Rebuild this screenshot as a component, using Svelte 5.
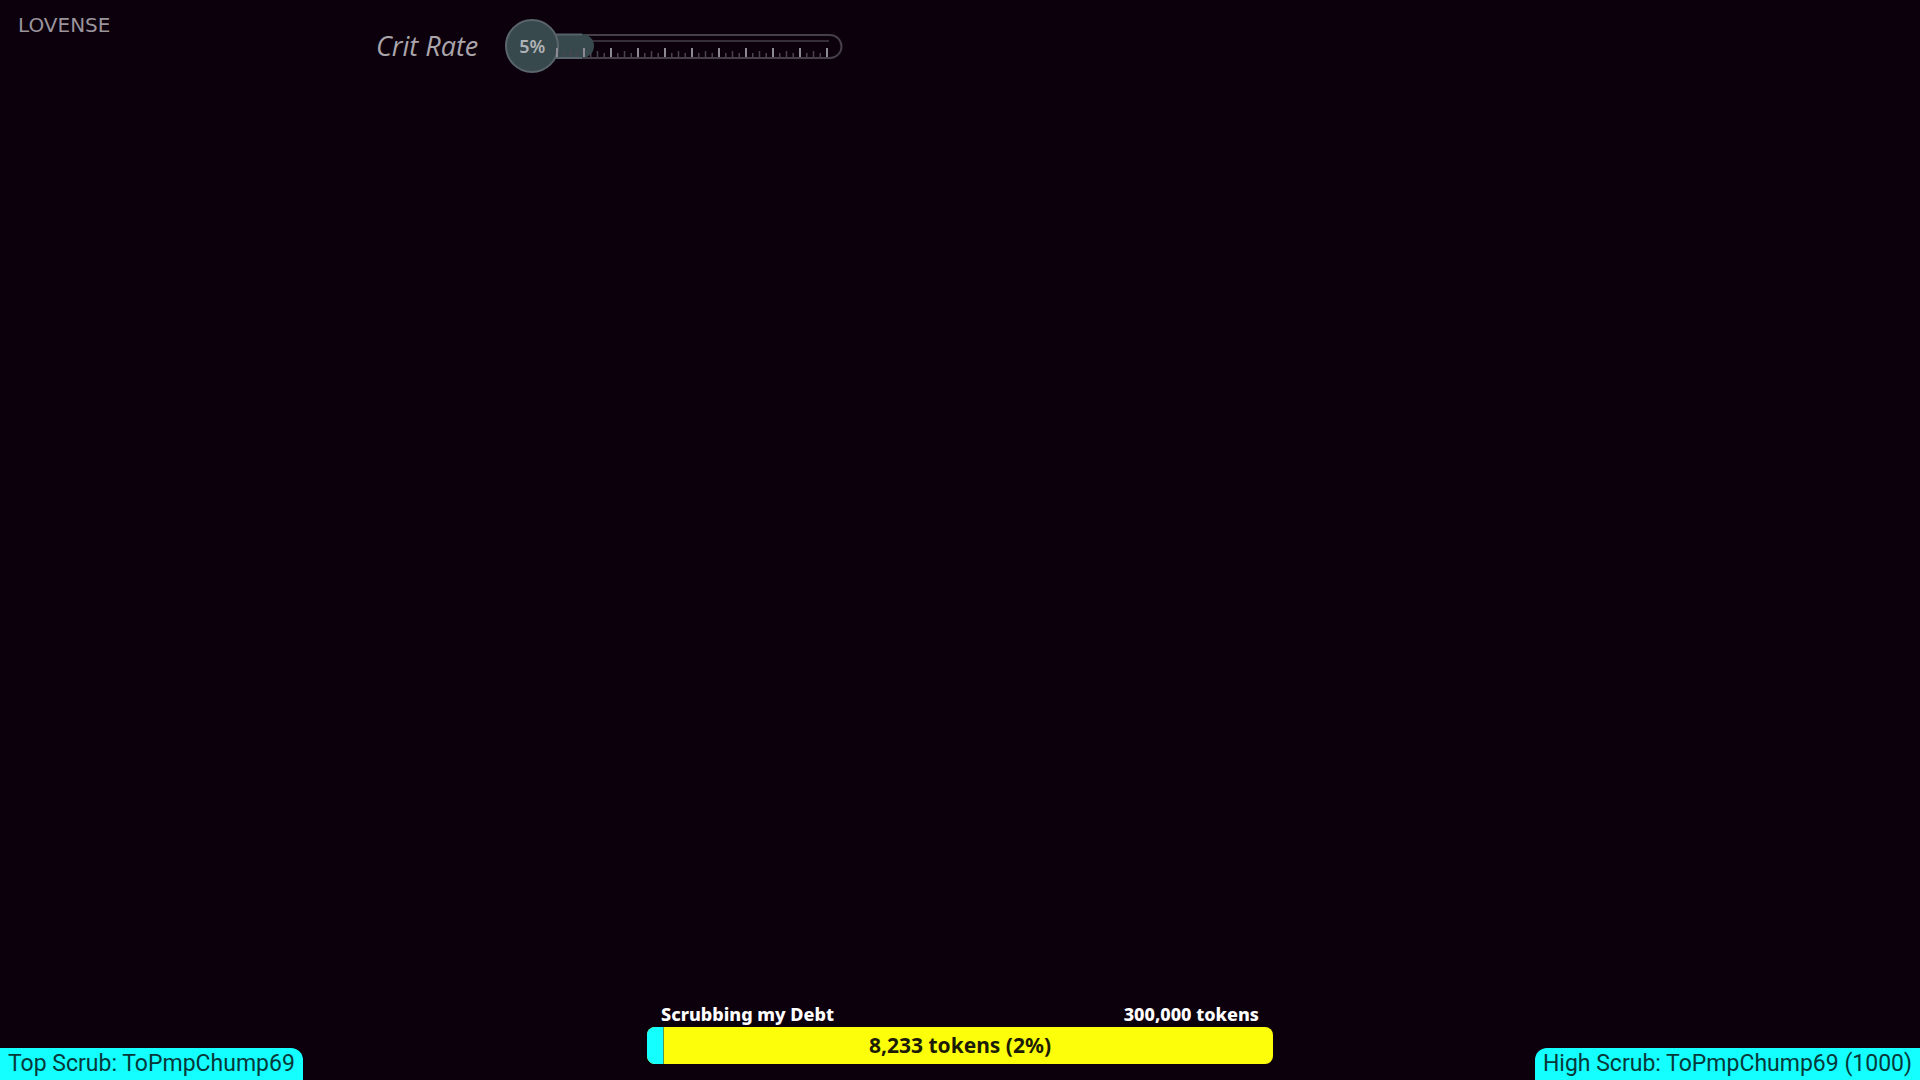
<script lang="ts">
  export let critRate: number = 5;
  export let raised: number = 8233;
  export let goal: number = 300000;
  export let topScrub: string = "ToPmpChump69";
  export let highScrub: string = "ToPmpChump69";
  export let highAmount: number = 1000;

  const tickGap = 6.75;
  const ticks = Array.from({ length: 41 }, (_, i) => ({
    x: 53 + i * tickGap,
    major: i % 4 === 0,
    top: i % 4 === 0 ? 30 : i % 2 === 0 ? 33 : 35,
  }));

  $: percent = (raised / goal) * 100;
</script>

<main class="overlay">
  <header class="top">
    <div class="logo">LOVENSE</div>

    <div class="crit">
      <span class="crit-label">Crit Rate</span>
      <div class="meter">
        <svg width="340" height="56" viewBox="0 0 340 56" aria-hidden="true">
          <path class="tube" d="M40 17H326a11.5 11.5 0 0 1 0 23H40z" />
          <path class="shine" d="M50 23H325" />
          <path class="level" d="M40 16H78a12 12 0 0 1 0 24H40z" />
          <path class="level-edge" d="M50 16.5H78M50 40H78" />
          <circle class="bulb" cx="28" cy="28" r="26" />
          {#each ticks as tick}
            <path
              class="tick"
              class:major={tick.major}
              d="M{tick.x} {tick.top}V39"
            />
          {/each}
        </svg>
        <span class="crit-value">{critRate}%</span>
      </div>
    </div>
  </header>

  <footer class="bottom">
    <div class="tag tag-left">Top Scrub: {topScrub}</div>

    <section class="goal">
      <div class="goal-head">
        <span>Scrubbing my Debt</span>
        <span>{goal.toLocaleString("en-US")} tokens</span>
      </div>
      <div
        class="bar"
        role="progressbar"
        aria-label="Scrubbing my Debt"
        aria-valuenow={raised}
        aria-valuemin="0"
        aria-valuemax={goal}
      >
        <div class="bar-fill" style="width: {percent}%"></div>
        <span class="bar-text">
          {raised.toLocaleString("en-US")} tokens ({Math.floor(percent)}%)
        </span>
      </div>
    </section>

    <div class="tag tag-right">High Scrub: {highScrub} ({highAmount})</div>
  </footer>
</main>

<style>
  :global(body) {
    background: #0d000d;
  }

  .overlay {
    min-height: 100vh;
    display: flex;
    flex-direction: column;
    justify-content: space-between;
    font-family: "Noto Sans", sans-serif;
  }

  .top {
    display: flex;
    align-items: flex-start;
    padding: 12px 18px;
  }

  .logo {
    width: 358px;
    font-family: "DejaVu Sans", sans-serif;
    font-size: 20px;
    line-height: 26px;
    color: #9a949c;
  }

  .crit {
    display: flex;
    align-items: center;
    gap: 26px;
    padding-top: 6px;
  }

  .crit-label {
    font-family: "Open Sans", sans-serif;
    font-size: 27px;
    font-style: italic;
    font-weight: 500;
    line-height: 36px;
    color: #aaa5ab;
  }

  .meter {
    position: relative;
  }

  .meter svg {
    display: block;
  }

  .crit-value {
    position: absolute;
    top: 0;
    left: 0;
    width: 56px;
    font-size: 18px;
    font-weight: 600;
    line-height: 56px;
    text-align: center;
    color: #aeb2b5;
  }

  .tube {
    fill: none;
    stroke: #454047;
    stroke-width: 2;
  }

  .shine {
    stroke: #353037;
    stroke-width: 2;
  }

  .level {
    fill: #38494d;
  }

  .level-edge {
    fill: none;
    stroke: #56636a;
    stroke-width: 2;
  }

  .tick {
    stroke: #4a454c;
    stroke-width: 1.5;
  }

  .tick.major {
    stroke: #8e8a91;
    stroke-width: 2;
  }

  .bulb {
    fill: #38494d;
    stroke: #59646b;
    stroke-width: 2;
  }

  .bottom {
    display: grid;
    grid-template-columns: 1fr 32.6% 1fr;
    align-items: end;
  }

  .tag {
    padding: 0 8px;
    background: #14ffff;
    color: #06383a;
    font-family: Roboto, sans-serif;
    font-size: 23px;
    line-height: 32px;
    white-space: nowrap;
  }

  .tag-left {
    justify-self: start;
    border-top-right-radius: 12px;
  }

  .tag-right {
    justify-self: end;
    border-top-left-radius: 12px;
  }

  .goal {
    padding-bottom: 16px;
  }

  .goal-head {
    display: flex;
    justify-content: space-between;
    padding: 0 14px;
    color: #ffffff;
    font-size: 18px;
    font-weight: 800;
    line-height: 26px;
  }

  .bar {
    position: relative;
    height: 37px;
    border-radius: 8px;
    background: #fdff0a;
    overflow: hidden;
  }

  .bar-fill {
    height: 100%;
    box-sizing: border-box;
    border-right: 1px solid #4f9a5c;
    background: #14ffff;
  }

  .bar-text {
    position: absolute;
    inset: 0;
    color: #1c1c05;
    font-size: 21px;
    font-weight: 700;
    line-height: 37px;
    text-align: center;
  }
</style>
